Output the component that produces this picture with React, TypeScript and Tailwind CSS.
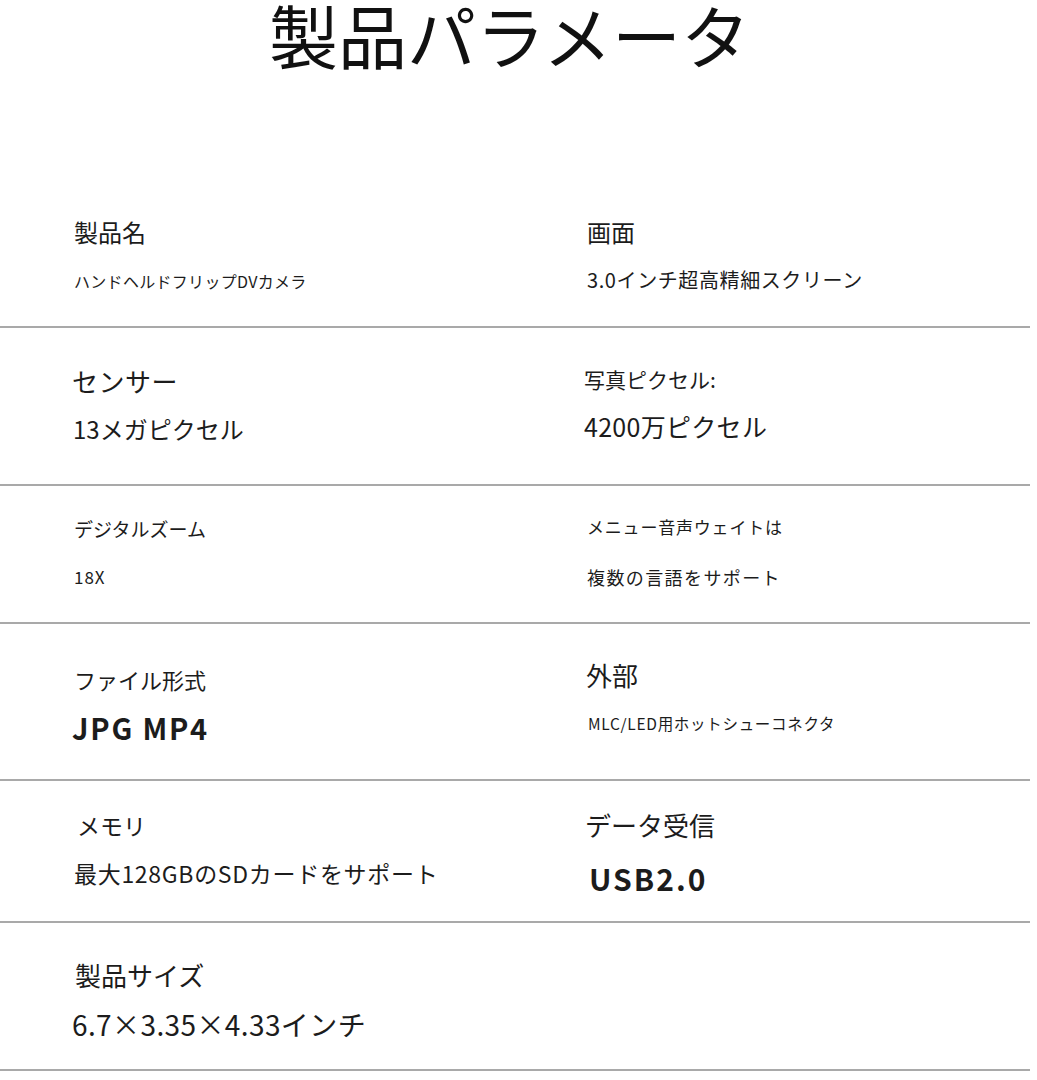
import React from "react";

function Divider() {
  return <div className="h-[2px] w-[1030px] bg-[#a9a9a9]" />;
}

export default function App() {
  return (
    <div
      className="w-[1037px] h-[1080px] bg-white text-[#1c1c1c] overflow-hidden"
      style={{ fontFamily: '"Noto Sans CJK JP", "Noto Sans", sans-serif' }}
    >
      <div className="h-[200px] flex justify-center pr-[18px]">
        <h1 className="text-[69px] leading-[1.2] font-normal mt-[-7px] text-[#111]">製品パラメータ</h1>
      </div>

      {/* Row 1 */}
      <div className="h-[126px] grid grid-cols-[512px_1fr] pl-[72px]">
        <div className="flex flex-col">
          <div className="mt-[20px] ml-[2px] text-[24px] leading-none">製品名</div>
          <div className="mt-[29px] ml-[2px] text-[16px] leading-none tracking-[0.3px]">ハンドヘルドフリップDVカメラ</div>
        </div>
        <div className="flex flex-col">
          <div className="mt-[20px] ml-[3px] text-[24px] leading-none">画面</div>
          <div className="mt-[26px] ml-[3px] text-[20px] leading-none tracking-[0.6px]">3.0インチ超高精細スクリーン</div>
        </div>
      </div>
      <Divider />

      {/* Row 2 */}
      <div className="h-[156px] grid grid-cols-[512px_1fr] pl-[72px]">
        <div className="flex flex-col">
          <div className="mt-[40px] text-[26px] leading-none tracking-[0.5px]">センサー</div>
          <div className="mt-[23px] ml-[1px] text-[24px] leading-none">13メガピクセル</div>
        </div>
        <div className="flex flex-col">
          <div className="mt-[41px] text-[21px] leading-none">写真ピクセル:</div>
          <div className="mt-[24px] text-[25px] leading-none tracking-[0.3px]">4200万ピクセル</div>
        </div>
      </div>
      <Divider />

      {/* Row 3 */}
      <div className="h-[136px] grid grid-cols-[512px_1fr] pl-[72px]">
        <div className="flex flex-col">
          <div className="mt-[33px] ml-[2px] text-[19px] leading-none">デジタルズーム</div>
          <div className="mt-[30px] ml-[2px] text-[17px] leading-none tracking-[1px]">18X</div>
        </div>
        <div className="flex flex-col">
          <div className="mt-[32px] ml-[3px] text-[17px] leading-none tracking-[0.8px]">メニュー音声ウェイトは</div>
          <div className="mt-[33px] ml-[3px] text-[18px] leading-none tracking-[1.4px]">複数の言語をサポート</div>
        </div>
      </div>
      <Divider />

      {/* Row 4 */}
      <div className="h-[155px] grid grid-cols-[512px_1fr] pl-[72px]">
        <div className="flex flex-col">
          <div className="mt-[44px] ml-[2px] text-[22px] leading-none">ファイル形式</div>
          <div className="mt-[23px] text-[29px] leading-none font-bold tracking-[1.8px]">JPG MP4</div>
        </div>
        <div className="flex flex-col">
          <div className="mt-[38px] ml-[2px] text-[26px] leading-none">外部</div>
          <div className="mt-[28px] ml-[4px] text-[15.5px] leading-none tracking-[0.7px]">MLC/LED用ホットシューコネクタ</div>
        </div>
      </div>
      <Divider />

      {/* Row 5 */}
      <div className="h-[140px] grid grid-cols-[512px_1fr] pl-[72px]">
        <div className="flex flex-col">
          <div className="mt-[33px] ml-[5px] text-[23px] leading-none">メモリ</div>
          <div className="mt-[25px] ml-[2px] text-[23px] leading-none tracking-[0.7px]">最大128GBのSDカードをサポート</div>
        </div>
        <div className="flex flex-col">
          <div className="mt-[31px] ml-[1px] text-[26px] leading-none">データ受信</div>
          <div className="mt-[25px] ml-[5px] text-[30px] leading-none font-bold tracking-[2px]">USB2.0</div>
        </div>
      </div>
      <Divider />

      {/* Row 6 */}
      <div className="h-[146px] grid grid-cols-[512px_1fr] pl-[72px]">
        <div className="flex flex-col">
          <div className="mt-[39px] ml-[3px] text-[26px] leading-none">製品サイズ</div>
          <div className="mt-[22px] text-[28px] leading-none tracking-[0.4px]">6.7×3.35×4.33インチ</div>
        </div>
        <div />
      </div>
      <Divider />
    </div>
  );
}
